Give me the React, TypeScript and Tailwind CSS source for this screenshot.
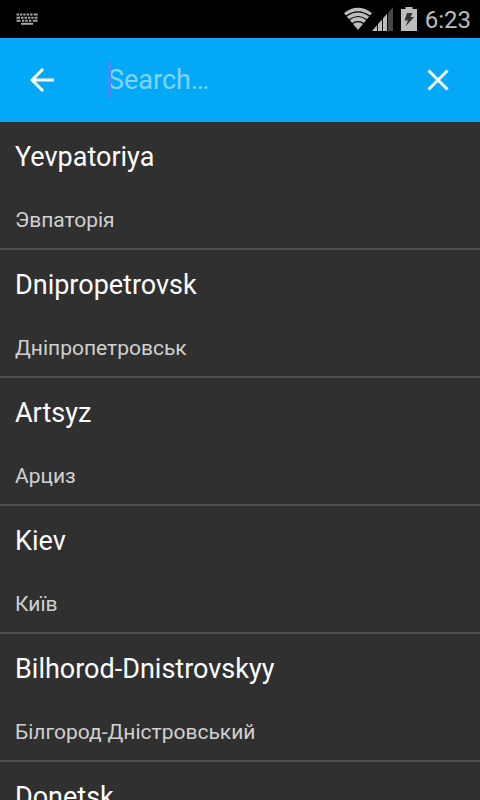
import React from "react";

interface City {
    name: string;
    localName: string;
}

const cities: City[] = [
    { name: "Yevpatoriya", localName: "Эвпаторія" },
    { name: "Dnipropetrovsk", localName: "Дніпропетровськ" },
    { name: "Artsyz", localName: "Арциз" },
    { name: "Kiev", localName: "Київ" },
    { name: "Bilhorod-Dnistrovskyy", localName: "Білгород-Дністровський" },
    { name: "Donetsk", localName: "Донецьк" },
];

function KeyboardIcon() {
    return (
        <svg width="22" height="12" viewBox="0 0 22 12" fill="none" stroke="#a8a8a8" strokeWidth="2" aria-hidden="true">
            <path d="M0.5 1.5H3M4 1.5H6.3M7.3 1.5H9.6M10.600 1.5H13M14 1.5H16.500M17.800 1.5H21.500" />
            <path d="M0.5 4.800H4M5 4.800H7.500M8.500 4.800H11M12 4.800H14.300M15.300 4.800H17.600M18.600 4.800H21.500" />
            <path d="M0.5 7.800H4.500M6 7.800H8.300M9.300 7.800H11.800M13 7.800H15.300M16.800 7.800H21.500" />
            <path d="M5 10.800H17" />
        </svg>
    );
}

function WifiIcon() {
    return (
        <svg width="28" height="24" viewBox="0 0 28 24" aria-hidden="true">
            <path d="M0 6Q14 -4.500 28 6L14 23Z" fill="#bdbdbd" />
            <path d="M2 9.300Q14 0.500 26 9.300M4.800 13Q14 6 23.200 13M8 16.800Q14 12.300 20 16.800" fill="none" stroke="#000" strokeWidth="1.200" />
        </svg>
    );
}

function SignalIcon() {
    return (
        <svg width="21" height="24" viewBox="0 0 21 24" aria-hidden="true">
            <path d="M0 24L21 0V24Z" fill="#474747" />
            <path d="M0 24L16 5.700V24Z" fill="#bdbdbd" />
            <path d="M5.500 16V24M10.500 10V24M15.500 5V24" stroke="#000" strokeWidth="1" />
        </svg>
    );
}

function BatteryIcon() {
    return (
        <svg width="16" height="24" viewBox="0 0 16 24" aria-hidden="true">
            <path d="M4.500 0H11.500V2H16V24H0V2H4.500Z" fill="#bdbdbd" />
            <path d="M6 6H11.500L9.500 10H13L4.500 19.500L7 13.500H3.500Z" fill="#333" />
        </svg>
    );
}

function StatusBar() {
    return (
        <div className="flex h-[38px] shrink-0 items-center justify-between bg-black pl-4 pr-[9px]">
            <KeyboardIcon />
            <div className="flex items-center">
                <WifiIcon />
                <SignalIcon />
                <span className="ml-2">
                    <BatteryIcon />
                </span>
                <span className="ml-2 pt-0.5 text-2xl leading-8 text-[#bdbdbd]">6:23</span>
            </div>
        </div>
    );
}

function SearchBar() {
    return (
        <header className="flex h-[84px] shrink-0 items-center bg-[#03a9f7]">
            <button type="button" aria-label="Back" className="flex size-[84px] items-center justify-center">
                <svg width="24" height="24" viewBox="0 0 24 24" fill="none" stroke="#fff" strokeWidth="3" aria-hidden="true">
                    <path d="M24 12H2M13 1L2 12L13 23" />
                </svg>
            </button>
            <div className="relative ml-6 min-w-0 flex-1">
                <input
                    type="text"
                    aria-label="Search"
                    placeholder="Search…"
                    className="block h-9 w-full bg-transparent text-[27px] text-white outline-none placeholder:text-[#81d4fb]"
                />
                {/* Text cursor */}
                <span className="absolute inset-y-0 left-0 w-[3px] bg-[#448aff]" />
            </div>
            <button type="button" aria-label="Clear" className="flex size-[84px] items-center justify-center">
                <svg width="22" height="22" viewBox="0 0 22 22" fill="none" stroke="#fff" strokeWidth="3" aria-hidden="true">
                    <path d="M1.500 1.500L20.500 20.500M20.500 1.500L1.500 20.500" />
                </svg>
            </button>
        </header>
    );
}

function CityRow({ name, localName }: City) {
    return (
        <li className="flex h-32 flex-col justify-between border-b-2 border-[#505050] px-[15px] pb-3 pt-[17px]">
            <h2 className="text-[27px] leading-9 text-white">{name}</h2>
            <p className="text-[21px] leading-8 text-[#d0d0d0]">{localName}</p>
        </li>
    );
}

export default function App() {
    return (
        <div className="flex h-screen flex-col overflow-hidden bg-[#303030] font-['Roboto',sans-serif]">
            <StatusBar />
            <SearchBar />
            <ul className="min-h-0 flex-1 overflow-hidden">
                {cities.map((city) => (
                    <CityRow key={city.name} {...city} />
                ))}
            </ul>
        </div>
    );
}
